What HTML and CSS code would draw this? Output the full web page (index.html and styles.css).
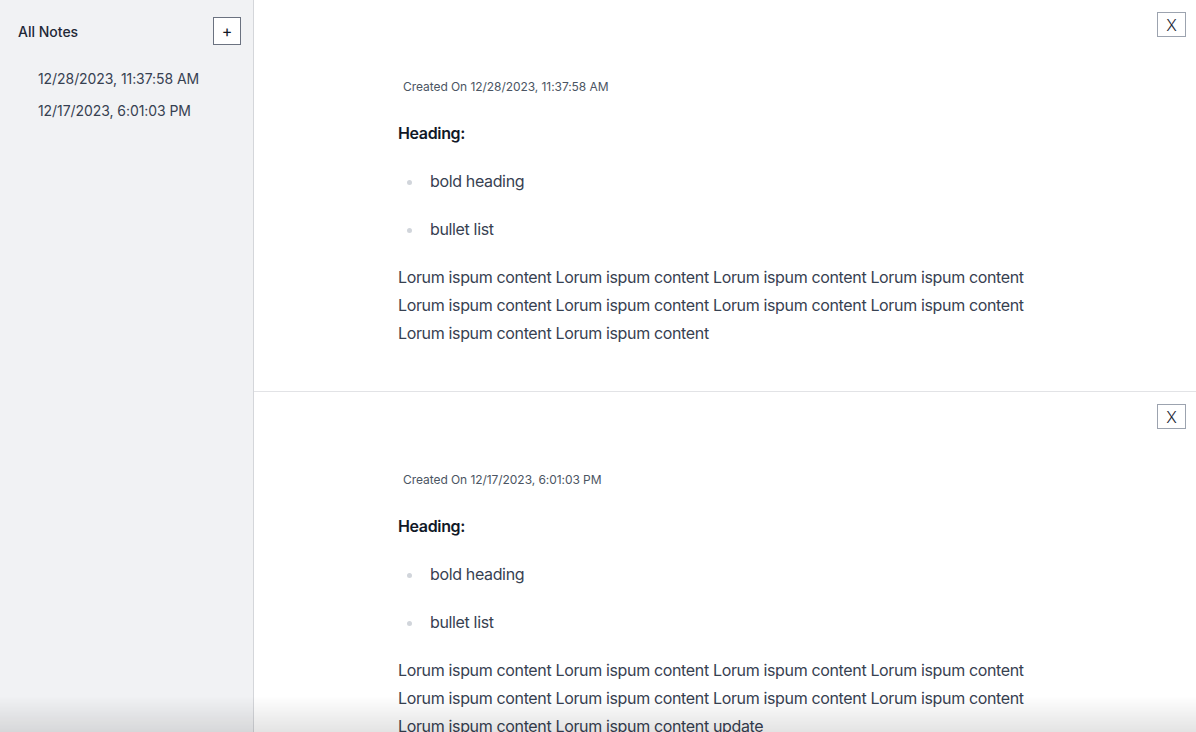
FILE: index.html
```html
<!DOCTYPE html>
<html lang="en">
<head>
<meta charset="utf-8">
<title>Notes</title>
<link rel="stylesheet" href="styles.css">
</head>
<body>
<div class="app">
  <aside class="sidebar">
    <div class="sidebar-head">
      <span class="sidebar-title">All Notes</span>
      <button class="add-btn">+</button>
    </div>
    <ul class="note-list">
      <li>12/28/2023, 11:37:58 AM</li>
      <li>12/17/2023, 6:01:03 PM</li>
    </ul>
  </aside>
  <main class="main">
    <section class="note">
      <div class="note-bar"><button class="close-btn">X</button></div>
      <article class="prose">
        <div class="created">Created On 12/28/2023, 11:37:58 AM</div>
        <p class="heading">Heading:</p>
        <ul>
          <li>bold heading</li>
          <li>bullet list</li>
        </ul>
        <p>Lorum ispum content Lorum ispum content Lorum ispum content Lorum ispum content Lorum ispum content Lorum ispum content Lorum ispum content Lorum ispum content Lorum ispum content Lorum ispum content</p>
      </article>
    </section>
    <section class="note">
      <div class="note-bar"><button class="close-btn">X</button></div>
      <article class="prose">
        <div class="created">Created On 12/17/2023, 6:01:03 PM</div>
        <p class="heading">Heading:</p>
        <ul>
          <li>bold heading</li>
          <li>bullet list</li>
        </ul>
        <p>Lorum ispum content Lorum ispum content Lorum ispum content Lorum ispum content Lorum ispum content Lorum ispum content Lorum ispum content Lorum ispum content Lorum ispum content Lorum ispum content update</p>
      </article>
    </section>
  </main>
</div>
<div class="shade"></div>
</body>
</html>
```
FILE: styles.css
```css
* { box-sizing: border-box; }
html, body { margin: 0; padding: 0; height: 100%; }
body {
  font-family: Inter, "Noto Sans", sans-serif;
  color: #374151;
  background: #fff;
  overflow: hidden;
  letter-spacing: -0.022em;
}
.app {
  display: flex;
  height: 100vh;
}
.sidebar {
  width: 254px;
  flex: none;
  background: #f1f2f4;
  border-right: 1px solid #d4d6da;
  padding: 17px 12px 0 18px;
}
.sidebar-head {
  display: flex;
  align-items: center;
  justify-content: space-between;
}
.sidebar-title {
  font-size: 14px;
  font-weight: 500;
  color: #1f2937;
  letter-spacing: 0;
}
.add-btn {
  width: 28px;
  height: 28px;
  border: 1px solid #6b7280;
  background: #fff;
  font-family: Inter, sans-serif;
  font-size: 16px;
  color: #111827;
  padding: 0;
  line-height: 1;
}
.note-list {
  list-style: none;
  margin: 24px 0 0;
  padding: 0 0 0 20px;
  font-size: 14px;
  color: #374151;
  letter-spacing: -0.005em;
}
.note-list li {
  line-height: 20px;
  margin-bottom: 12px;
}
.main {
  flex: 1;
  overflow: hidden;
}
.note {
  border-bottom: 1px solid #e2e3e6;
  padding: 12px 10px 24px 0;
}
.note-bar {
  display: flex;
  justify-content: flex-end;
}
.close-btn {
  width: 29px;
  height: 25px;
  border: 1px solid #9ca3af;
  background: #fff;
  font-family: Inter, sans-serif;
  font-size: 16px;
  font-weight: 300;
  color: #1f2937;
  padding: 0;
  line-height: 1;
}
.prose {
  max-width: 656px;
  margin: 0 auto;
  padding-left: 6px;
  font-size: 16px;
  line-height: 28px;
}
.created {
  font-size: 12px;
  line-height: 16px;
  color: #4b5563;
  margin: 42px 0 24px 5px;
  letter-spacing: -0.005em;
}
.prose p {
  margin: 0 0 20px;
}
.prose .heading {
  font-weight: 600;
  color: #111827;
}
.prose ul {
  margin: 0 0 20px;
  padding-left: 26px;
}
.prose li {
  padding-left: 6px;
  margin-bottom: 20px;
}
.prose li:last-child { margin-bottom: 0; }
.prose li::marker { color: #d1d5db; }
.note + .note .created { margin-top: 43px; }
.shade {
  position: fixed;
  left: 0;
  right: 0;
  bottom: 0;
  height: 36px;
  pointer-events: none;
  background: linear-gradient(to bottom, rgba(0,0,0,0), rgba(0,0,0,0.11));
}
```
